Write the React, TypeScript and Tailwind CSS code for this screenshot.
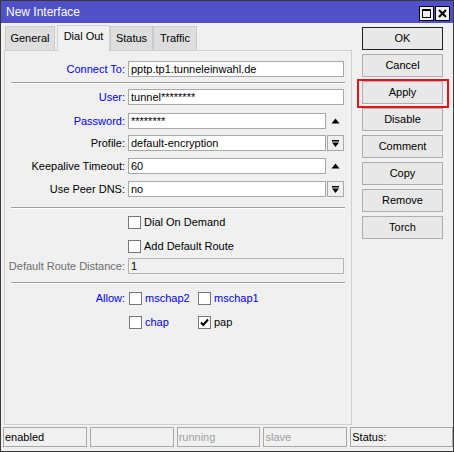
import React from 'react';

const BLUE = 'text-[#0000f0]';

function Field({ value, width, disabled }: { value: string; width: string; disabled?: boolean }) {
  return (
    <div
      className={`h-[16px] ${width} border ${disabled ? 'border-[#b4b4b4] bg-[#f0f0f0]' : 'border-[#a8a8a8] bg-white'} pl-[2px] text-[11px] leading-[14px] text-black whitespace-nowrap overflow-hidden`}
    >
      {value}
    </div>
  );
}

function UpArrow() {
  return (
    <div className="w-[17px] h-[16px] flex items-center justify-center">
      <svg width="9" height="6" viewBox="0 0 9 6">
        <path d="M0.5 5.5 L4.5 0.5 L8.5 5.5 Z" fill="#000" />
      </svg>
    </div>
  );
}

function DropButton() {
  return (
    <div className="w-[17px] h-[16px] border border-[#a8a8a8] bg-[#f0f0f0] flex items-center justify-center">
      <svg width="9" height="9" viewBox="0 0 9 9">
        <rect x="1" y="1" width="7" height="1.5" fill="#000" />
        <path d="M1 3.5 L8 3.5 L4.5 8 Z" fill="#000" />
      </svg>
    </div>
  );
}

function Row({
  label,
  labelClass = 'text-black',
  mt,
  children,
}: {
  label: string;
  labelClass?: string;
  mt: string;
  children: React.ReactNode;
}) {
  return (
    <div className={`flex items-center ${mt}`}>
      <div className={`w-[120px] text-right text-[11px] leading-[16px] ${labelClass}`}>{label}</div>
      <div className="ml-[3px] flex items-center gap-[1px]">{children}</div>
    </div>
  );
}

function Separator({ mt }: { mt: string }) {
  return <div className={`${mt} ml-[6px] w-[334px] h-[2px] border-t border-[#a0a0a0] border-b border-b-white`} />;
}

function Check({ checked }: { checked?: boolean }) {
  return (
    <div className="w-[13px] h-[13px] border border-[#777] bg-white flex items-center justify-center shrink-0">
      {checked && (
        <svg width="9" height="9" viewBox="0 0 9 9">
          <path d="M1 4.5 L3.3 7 L8 1.5" stroke="#000" strokeWidth="2" fill="none" />
        </svg>
      )}
    </div>
  );
}

function CheckItem({ label, checked, blue, width }: { label: string; checked?: boolean; blue?: boolean; width?: string }) {
  return (
    <div className={`flex items-center ${width ?? ''}`}>
      <Check checked={checked} />
      <span className={`ml-[3px] text-[11px] leading-[13px] ${blue ? BLUE : 'text-black'}`}>{label}</span>
    </div>
  );
}

function SideButton({ label, primary }: { label: string; primary?: boolean }) {
  return (
    <div
      className={`w-[81px] h-[23px] border ${primary ? 'border-[#222]' : 'border-[#adadad]'} bg-[#e8e8e8] flex items-center justify-center text-[11px] text-black`}
    >
      {label}
    </div>
  );
}

export default function App() {
  const tabs = [
    { name: 'General', w: 'w-[50px]' },
    { name: 'Dial Out', w: 'w-[53px]', active: true },
    { name: 'Status', w: 'w-[43px]' },
    { name: 'Traffic', w: 'w-[44px]' },
  ];

  return (
    <div className="w-[454px] h-[452px] border border-[#3a3a3a] bg-[#f0f0f0] font-['Liberation_Sans',Arial,sans-serif] overflow-hidden flex flex-col">
      {/* title bar */}
      <div className="h-[22px] bg-[#5050c8] flex items-center justify-between pl-[5px] pr-[3px]">
        <span className="text-white text-[12px] leading-[22px]">New Interface</span>
        <div className="flex gap-[1px] mt-[2px]">
          <div className="w-[15px] h-[15px] border border-black bg-[#f0f0f0] flex items-center justify-center">
            <div className="w-[9px] h-[9px] border border-black border-t-2" />
          </div>
          <div className="w-[15px] h-[15px] border border-black bg-[#f0f0f0] flex items-center justify-center">
            <svg width="9" height="9" viewBox="0 0 9 9">
              <path d="M1 1 L8 8 M8 1 L1 8" stroke="#000" strokeWidth="2" />
            </svg>
          </div>
        </div>
      </div>

      <div className="flex">
        {/* left: tabs + panel */}
        <div className="ml-[3px] w-[348px] pt-[2px]">
          <div className="h-[25px] flex items-end pl-[1px] relative z-10">
            {tabs.map((t, i) => (
              <div
                key={t.name}
                className={`${t.w} ${i === 1 ? 'ml-[2px]' : ''} ${
                  t.active
                    ? 'h-[26px] -mb-px bg-[#f0f0f0] border border-b-0 border-[#d0d0d0] pt-[4px]'
                    : 'h-[24px] bg-[#dedede] border border-b-0 border-[#cacaca] pt-[5px]'
                } text-center text-[11px] leading-[13px] text-black`}
              >
                {t.name}
              </div>
            ))}
          </div>
          <div className="h-[375px] border border-[#d0d0d0] flex flex-col">
            <Row label="Connect To:" labelClass={BLUE} mt="mt-[10px]">
              <Field value="pptp.tp1.tunneleinwahl.de" width="w-[216px]" />
            </Row>
            <Separator mt="mt-[5px]" />
            <Row label="User:" labelClass={BLUE} mt="mt-[5px]">
              <Field value="tunnel********" width="w-[216px]" />
            </Row>
            <Row label="Password:" labelClass={BLUE} mt="mt-[8px]">
              <Field value="********" width="w-[198px]" />
              <UpArrow />
            </Row>
            <Row label="Profile:" mt="mt-[6px]">
              <Field value="default-encryption" width="w-[198px]" />
              <DropButton />
            </Row>
            <Row label="Keepalive Timeout:" mt="mt-[7px]">
              <Field value="60" width="w-[198px]" />
              <UpArrow />
            </Row>
            <Row label="Use Peer DNS:" mt="mt-[7px]">
              <Field value="no" width="w-[198px]" />
              <DropButton />
            </Row>
            <Separator mt="mt-[10px]" />
            <div className="mt-[7px] ml-[123px]">
              <CheckItem label="Dial On Demand" />
            </div>
            <div className="mt-[11px] ml-[123px]">
              <CheckItem label="Add Default Route" />
            </div>
            <Row label="Default Route Distance:" labelClass="text-[#6d6d6d]" mt="mt-[5px]">
              <Field value="1" width="w-[216px]" disabled />
            </Row>
            <Separator mt="mt-[8px]" />
            <div className="mt-[8px] flex items-center">
              <div className={`w-[120px] text-right text-[11px] leading-[13px] ${BLUE}`}>Allow:</div>
              <div className="ml-[4px] flex items-center">
                <CheckItem label="mschap2" blue width="w-[69px]" />
                <CheckItem label="mschap1" blue />
              </div>
            </div>
            <div className="mt-[11px] ml-[124px] flex items-center">
              <CheckItem label="chap" blue width="w-[69px]" />
              <CheckItem label="pap" checked />
            </div>
          </div>
        </div>

        {/* right: buttons */}
        <div className="ml-[10px] pt-[4px] flex flex-col gap-[4px] relative">
          <SideButton label="OK" primary />
          <SideButton label="Cancel" />
          <SideButton label="Apply" />
          <SideButton label="Disable" />
          <SideButton label="Comment" />
          <SideButton label="Copy" />
          <SideButton label="Remove" />
          <SideButton label="Torch" />
          <div className="absolute left-[-5px] top-[56px] w-[92px] h-[29px] border-2 border-[#e8101a] pointer-events-none" />
        </div>
      </div>

      {/* status bar */}
      <div className="mt-[2px] ml-[2px] flex gap-[3px] text-[11px] leading-[18px]">
        <div className="w-[84px] h-[20px] border border-[#a8a8a8] pl-[1px] text-black">enabled</div>
        <div className="w-[84px] h-[20px] border border-[#a8a8a8]" />
        <div className="w-[84px] h-[20px] border border-[#a8a8a8] pl-[1px] text-[#a0a0a0]">running</div>
        <div className="w-[84px] h-[20px] border border-[#a8a8a8] pl-[1px] text-[#a0a0a0]">slave</div>
        <div className="w-[103px] h-[20px] border border-[#a8a8a8] pl-[1px] text-black">Status:</div>
      </div>
    </div>
  );
}
